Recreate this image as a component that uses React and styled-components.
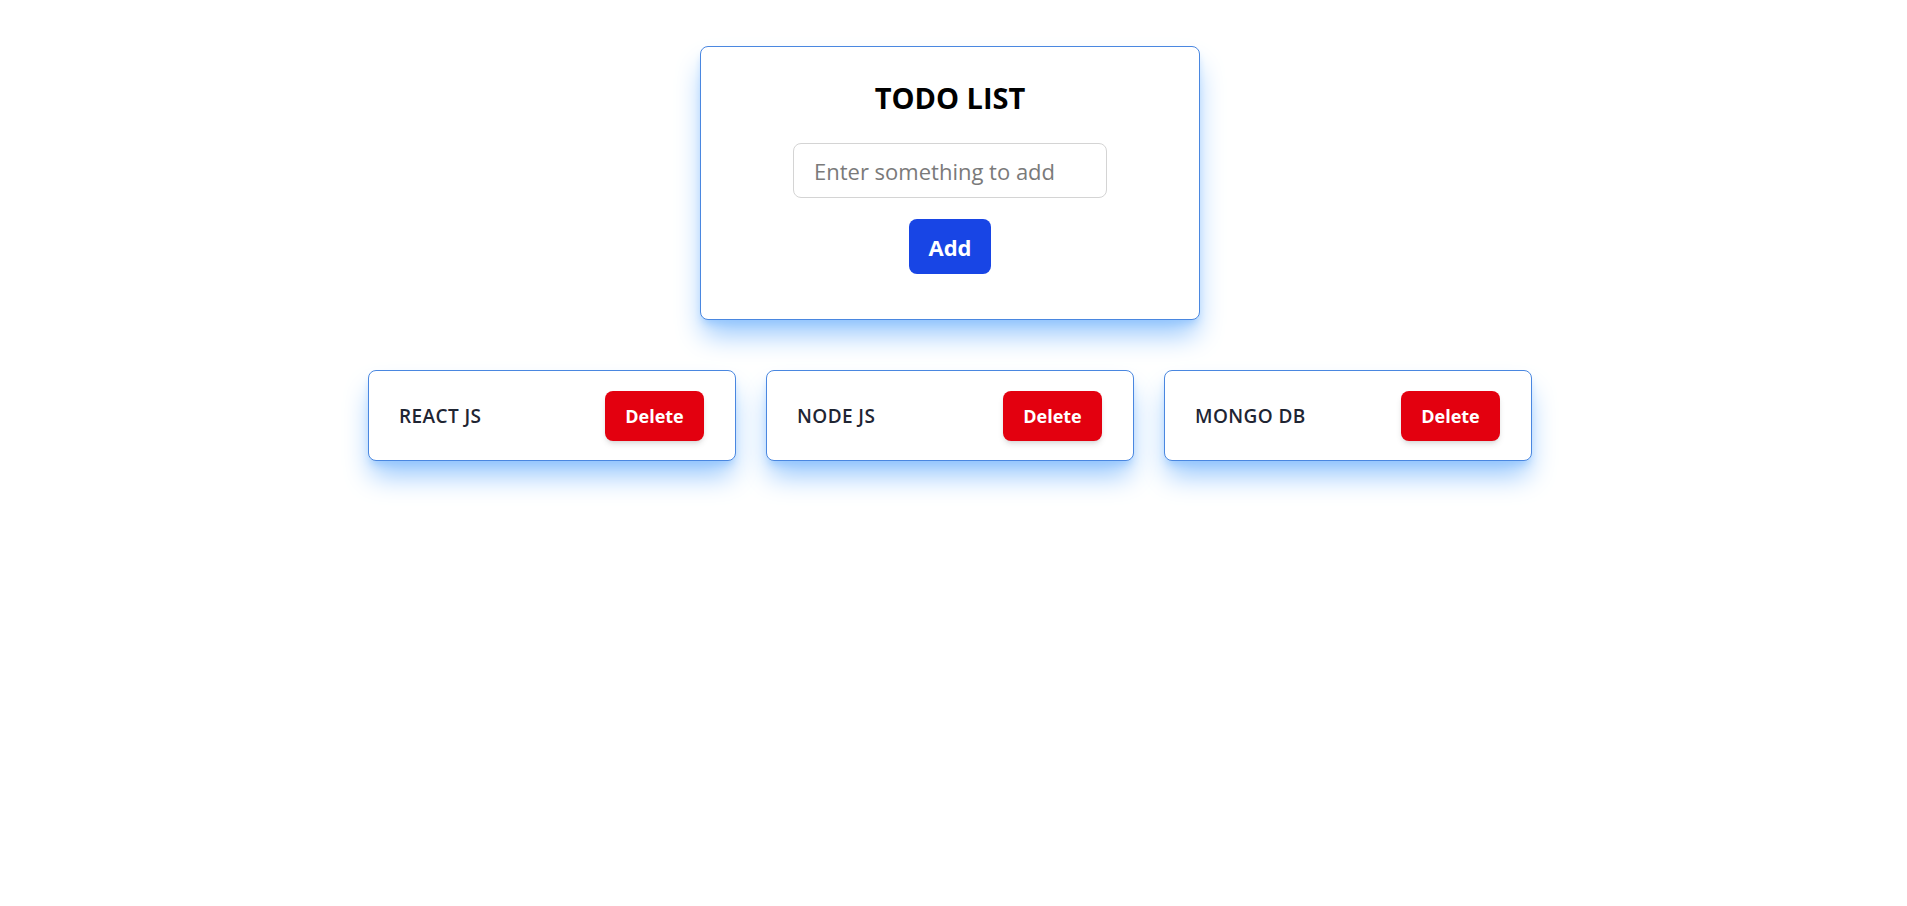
import React, { useState } from "react";
import styled, { createGlobalStyle } from "styled-components";

const GlobalStyle = createGlobalStyle`
  html, body { margin: 0; padding: 0; background: #ffffff; }
  body { font-family: "Open Sans", "Noto Sans", sans-serif; }
  * { box-sizing: border-box; }
`;

const Page = styled.main`
  width: 1900px;
  min-height: 100vh;
  padding-top: 46px;
  display: flex;
  flex-direction: column;
  align-items: center;
  gap: 50px;
`;

const FormCard = styled.section`
  width: 500px;
  height: 274px;
  border: 1px solid #4a87e0;
  border-radius: 8px;
  background: #fff;
  box-shadow: 0 18px 28px -4px #93c5fd, 0 6px 10px -4px #93c5fd;
  display: flex;
  flex-direction: column;
  align-items: center;
  padding-top: 31px;
`;

const Title = styled.h1`
  margin: 0;
  font-size: 29px;
  line-height: 40px;
  font-weight: 700;
  color: #000;
`;

const Input = styled.input`
  margin-top: 25px;
  width: 314px;
  height: 55px;
  border: 1px solid #d4d4d4;
  border-radius: 8px;
  padding: 0 20px;
  font-family: inherit;
  font-size: 22px;
  color: #222;
  outline: none;
  &::placeholder { color: #7a7a7a; }
`;

const AddButton = styled.button`
  margin-top: 21px;
  width: 82px;
  height: 55px;
  border: none;
  border-radius: 8px;
  background: #1845e5;
  color: #fff;
  font-family: inherit;
  font-size: 22px;
  font-weight: 700;
  cursor: pointer;
`;

const List = styled.ul`
  list-style: none;
  margin: 0;
  padding: 0;
  display: flex;
  gap: 30px;
`;

const Item = styled.li`
  width: 368px;
  height: 91px;
  border: 1px solid #4a87e0;
  border-radius: 8px;
  background: #fff;
  box-shadow: 0 18px 28px -4px #93c5fd, 0 6px 10px -4px #93c5fd;
  display: flex;
  align-items: center;
  justify-content: space-between;
  padding: 0 31px 0 30px;
`;

const ItemText = styled.span`
  font-size: 19px;
  font-weight: 600;
  color: #1f2533;
  letter-spacing: 0.4px;
`;

const DeleteButton = styled.button`
  width: 99px;
  height: 50px;
  border: none;
  border-radius: 8px;
  background: #e3000f;
  color: #fff;
  font-family: inherit;
  font-size: 18px;
  font-weight: 700;
  box-shadow: 0 4px 6px -1px rgba(0,0,0,0.12), 0 2px 4px -2px rgba(0,0,0,0.1);
  cursor: pointer;
`;

export default function App() {
  const [items, setItems] = useState(["REACT JS", "NODE JS", "MONGO DB"]);
  const [value, setValue] = useState("");
  const add = () => {
    if (value.trim()) {
      setItems([...items, value.trim().toUpperCase()]);
      setValue("");
    }
  };
  return (
    <>
      <GlobalStyle />
      <Page>
        <FormCard>
          <Title>TODO LIST</Title>
          <Input
            placeholder="Enter something to add"
            value={value}
            onChange={(e) => setValue(e.target.value)}
          />
          <AddButton onClick={add}>Add</AddButton>
        </FormCard>
        <List>
          {items.map((it, i) => (
            <Item key={i}>
              <ItemText>{it}</ItemText>
              <DeleteButton onClick={() => setItems(items.filter((_, j) => j !== i))}>
                Delete
              </DeleteButton>
            </Item>
          ))}
        </List>
      </Page>
    </>
  );
}
